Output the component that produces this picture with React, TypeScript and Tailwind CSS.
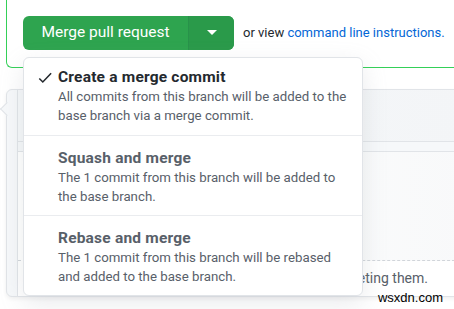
import React from "react";

const font = { fontFamily: 'Roboto, "Noto Sans", sans-serif' };

function Caret() {
  return (
    <svg width="10" height="6" viewBox="0 0 10 6" className="block">
      <path d="M0 0h10L5 5z" fill="#fff" />
    </svg>
  );
}

function Check() {
  return (
    <svg width="14" height="14" viewBox="0 0 16 16" className="block">
      <path d="M1.5 8.5l4 4L15 2.5" fill="none" stroke="#24292e" strokeWidth="1.8" />
    </svg>
  );
}

const items = [
  {
    title: "Create a merge commit",
    desc: ["All commits from this branch will be added to the", "base branch via a merge commit."],
    selected: true,
  },
  {
    title: "Squash and merge",
    desc: ["The 1 commit from this branch will be added to", "the base branch."],
    selected: false,
  },
  {
    title: "Rebase and merge",
    desc: ["The 1 commit from this branch will be rebased", "and added to the base branch."],
    selected: false,
  },
];

export default function App() {
  return (
    <div
      className="relative w-[454px] h-[309px] overflow-hidden bg-white text-[#24292e]"
      style={font}
    >
      {/* ── merge box ── */}
      <div className="ml-[6px] h-[68px] border-l border-b border-[#34d058] rounded-bl-md pl-4 pt-4">
        <div className="flex items-center whitespace-nowrap">
          <div className="flex h-[34px] rounded-md bg-[#2ea44f] text-white">
            <div className="flex w-[165px] items-center justify-center text-[15.5px]">
              Merge pull request
            </div>
            <div className="flex w-[46px] items-center justify-center border-l border-[#28924a] rounded-r-md bg-[#2a9a4a]">
              <Caret />
            </div>
          </div>
          <span className="ml-[9px] text-[13px] text-[#24292e]">
            or view <span className="text-[#0366d6]">command line instructions.</span>
          </span>
        </div>
      </div>

      {/* ── timeline box behind ── */}
      <div className="relative ml-[6px] mt-[21px] h-[208px] w-[470px] rounded-md border border-[#e1e4e8] bg-[#f6f8fa] shadow-[0_2px_4px_rgba(0,0,0,0.06)]">
        <div className="ml-[10px] flex h-full flex-col border-l border-[#e1e4e8] bg-white">
          <div className="h-[52px] border-b border-[#e1e4e8] bg-gradient-to-r from-[#f6f8fa] to-[#f3f5f7]" />
          <div className="h-[10px] border-b border-[#e1e4e8] bg-[#f6f8fa]" />
          <div className="h-[109px] border-b border-dashed border-[#d1d5da] bg-gradient-to-r from-white to-[#f8f9fa]" />
          <div className="flex flex-1 items-center justify-end pr-[47px] text-[14px] text-[#586069]">
            merge without deleting them.
          </div>
        </div>
        <div className="absolute left-[-5px] top-[14px] h-[10px] w-[10px] rotate-45 border-l border-b border-[#e1e4e8] bg-[#f6f8fa]" />
      </div>

      <div className="absolute right-[11px] bottom-[2px] text-[13px] text-black" style={{ fontFamily: '"Liberation Sans", Arial, sans-serif' }}>
        wsxdn.com
      </div>

      {/* ── dropdown menu ── */}
      <div className="absolute left-[23px] top-[57px] w-[340px] rounded-md border border-[#e1e4e8] bg-white shadow-[0_8px_24px_rgba(149,157,165,0.2)]">
        {items.map((item, i) => (
          <div
            key={item.title}
            className={
              "flex pl-[14px] pr-2 whitespace-nowrap " +
              (i === 0 ? "pt-[9px] pb-[10px]" : "pt-[12px] pb-[9px] border-t border-[#eaecef]")
            }
          >
            <div className="w-[20px] shrink-0 pt-[4px]">{item.selected && <Check />}</div>
            <div>
              <div
                className={
                  "text-[15.5px] font-bold leading-[20px] tracking-[0.2px] " +
                  (item.selected ? "text-[#24292e]" : "text-[#586069]")
                }
              >
                {item.title}
              </div>
              {item.desc.map((d) => (
                <div key={d} className="text-[13.25px] leading-[19px] text-[#586069]">
                  {d}
                </div>
              ))}
            </div>
          </div>
        ))}
      </div>
    </div>
  );
}
